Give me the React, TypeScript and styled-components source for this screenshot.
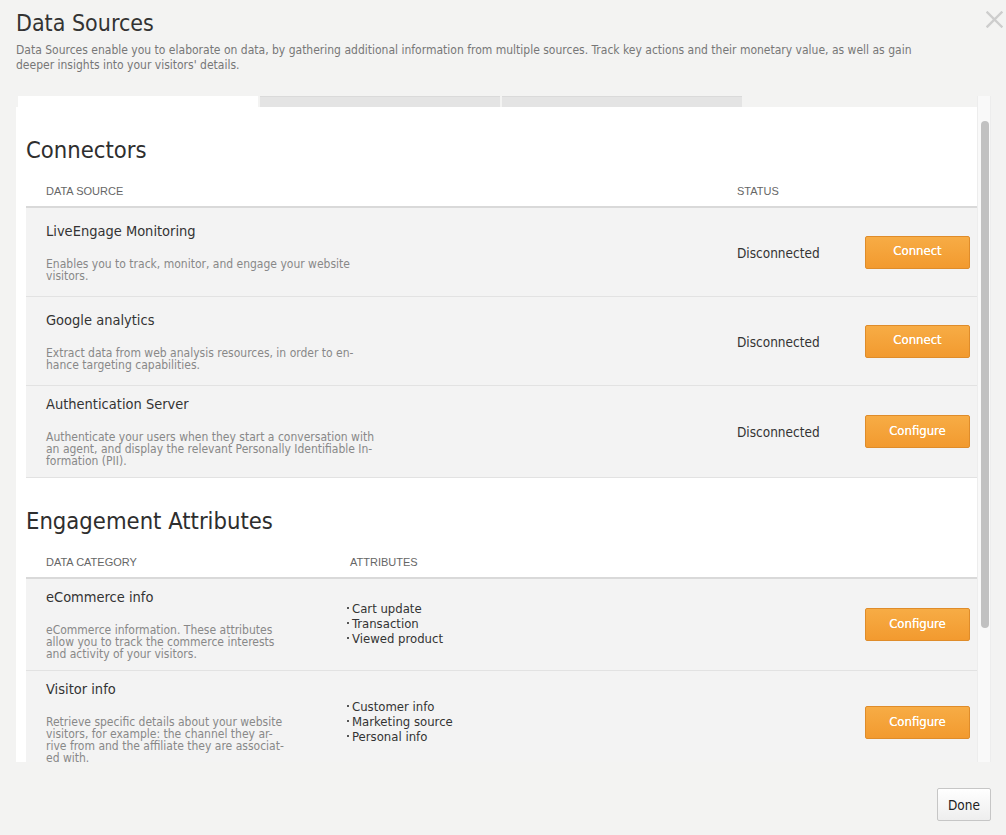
import React from 'react';
import styled, { createGlobalStyle } from 'styled-components';

const GlobalStyle = createGlobalStyle`
  html, body { margin: 0; padding: 0; background: #f3f3f2; }
  body { font-family: "DejaVu Sans Condensed", "DejaVu Sans", sans-serif; color: #333; }
  * { box-sizing: border-box; }
`;

const Page = styled.div`
  height: 835px;
  display: flex;
  flex-direction: column;
  padding: 9px 15px 0 16px;
  overflow: hidden;
`;

const Header = styled.header`
  display: flex;
  justify-content: space-between;
  align-items: flex-start;
  margin-right: -12px;
`;

const Title = styled.h1`
  margin: 0;
  font-size: 23px;
  line-height: 28px;
  font-weight: normal;
  color: #333;
`;

const Close = styled.button`
  border: 0;
  background: none;
  padding: 0;
  width: 17px;
  height: 17px;
  margin-top: 2px;
  display: flex;
  cursor: pointer;
`;

const Intro = styled.p`
  margin: 6px 0 0;
  font-size: 12px;
  line-height: 15px;
  color: #777;
  white-space: pre-line;
`;

const ScrollFrame = styled.div`
  margin-top: 23px;
  height: 666px;
  flex: none;
  display: flex;
`;

const ScrollContent = styled.div`
  flex: 1;
  min-width: 0;
  overflow: hidden;
`;

const ScrollTrack = styled.div`
  width: 14px;
  flex: none;
  background: #f9f9f9;
  border-left: 1px solid #ededed;
  border-right: 1px solid #ededed;
  padding: 25px 0 0 3px;
`;

const ScrollThumb = styled.div`
  width: 8px;
  height: 507px;
  background: #c1c1c1;
  border-radius: 4px;
`;

const Tabs = styled.div`
  display: flex;
  gap: 2px;
  padding-left: 2px;
  height: 11px;
`;

const Tab = styled.div<{ $active?: boolean }>`
  width: 240px;
  background: ${p => (p.$active ? '#fff' : '#e4e4e4')};
  border-top: 1px solid ${p => (p.$active ? '#fff' : '#dadada')};
`;

const Panel = styled.div`
  background: #fff;
  padding: 0 0 160px 10px;
`;

const SectionTitle = styled.h2`
  margin: 0;
  padding-top: 28px;
  font-size: 23.6px;
  line-height: 30px;
  font-weight: normal;
  color: #2e2e2e;
`;

const HeadRow = styled.div<{ $cols: string }>`
  display: grid;
  grid-template-columns: ${p => p.$cols};
  padding: 19px 7px 8px 20px;
  border-bottom: 2px solid #d9d9d9;
`;

const HeadCell = styled.div<{ $indent?: number }>`
  font-family: "Liberation Sans", Arial, sans-serif;
  font-size: 11px;
  line-height: 14px;
  color: #666;
  text-transform: uppercase;
  padding-left: ${p => p.$indent ?? 0}px;
`;

const Row = styled.div<{ $cols: string }>`
  display: grid;
  grid-template-columns: ${p => p.$cols};
  align-items: center;
  min-height: 89px;
  padding: 10px 7px 10px 20px;
  background: #f3f3f3;
  border-bottom: 1px solid #e2e2e2;
`;

const NameCell = styled.div`
  display: flex;
  flex-direction: column;
`;

const RowTitle = styled.div`
  font-size: 14.5px;
  line-height: 16px;
  color: #333;
`;

const RowDesc = styled.div`
  margin-top: 19px;
  font-size: 12px;
  line-height: 12px;
  color: #888;
  white-space: pre-line;
`;

const Status = styled.div`
  font-size: 13.5px;
  color: #333;
  margin-top: 1px;
`;

const ActionButton = styled.button`
  width: 105px;
  height: 33px;
  border: 1px solid #df8c2a;
  border-radius: 2px;
  background: linear-gradient(#f7ac45, #f29a2f);
  color: #fff;
  font-family: "DejaVu Sans Condensed", "DejaVu Sans", sans-serif;
  font-size: 13px;
  padding: 0 0 3px;
  text-shadow: 0 0 0.4px #fff;
  cursor: pointer;
`;

const AttrList = styled.ul`
  list-style: none;
  margin: 0 0 3px;
  padding: 0;
`;

const AttrItem = styled.li`
  font-size: 13px;
  line-height: 15px;
  color: #333;
  display: flex;
  align-items: center;
  &::before {
    content: '';
    width: 2px;
    height: 2px;
    background: #555;
    margin: 0 3px 1px 0;
  }
`;

const Footer = styled.footer`
  display: flex;
  justify-content: flex-end;
  padding-top: 26px;
`;

const DoneButton = styled.button`
  width: 54px;
  height: 33px;
  border: 1px solid #c6c6c6;
  border-radius: 2px;
  background: linear-gradient(#ffffff, #eeeeee);
  color: #222;
  font-family: "DejaVu Sans Condensed", "DejaVu Sans", sans-serif;
  font-size: 13.5px;
  padding: 0;
  cursor: pointer;
`;

const CONNECTOR_COLS = '1fr 128px 105px';
const ATTR_COLS = '301px 1fr 105px';

const connectors = [
  {
    name: 'LiveEngage Monitoring',
    desc: 'Enables you to track, monitor, and engage your website\nvisitors.',
    action: 'Connect',
  },
  {
    name: 'Google analytics',
    desc: 'Extract data from web analysis resources, in order to en-\nhance targeting capabilities.',
    action: 'Connect',
  },
  {
    name: 'Authentication Server',
    desc: 'Authenticate your users when they start a conversation with\nan agent, and display the relevant Personally Identifiable In-\nformation (PII).',
    action: 'Configure',
  },
];

const attributes = [
  {
    name: 'eCommerce info',
    desc: 'eCommerce information. These attributes\nallow you to track the commerce interests\nand activity of your visitors.',
    items: ['Cart update', 'Transaction', 'Viewed product'],
  },
  {
    name: 'Visitor info',
    desc: 'Retrieve specific details about your website\nvisitors, for example: the channel they ar-\nrive from and the affiliate they are associat-\ned with.',
    items: ['Customer info', 'Marketing source', 'Personal info'],
  },
];

export default function App() {
  return (
    <>
      <GlobalStyle />
      <Page>
        <Header>
          <Title>Data Sources</Title>
          <Close aria-label="Close">
            <svg width="17" height="17" viewBox="0 0 17 17">
              <path d="M1.5 1.5 L15.5 15.5 M15.5 1.5 L1.5 15.5" stroke="#cdcdcd" strokeWidth="2.4" strokeLinecap="square" />
            </svg>
          </Close>
        </Header>
        <Intro>
          {'Data Sources enable you to elaborate on data, by gathering additional information from multiple sources. Track key actions and their monetary value, as well as gain\ndeeper insights into your visitors\' details.'}
        </Intro>
        <ScrollFrame>
          <ScrollContent>
            <Tabs>
              <Tab $active />
              <Tab />
              <Tab />
            </Tabs>
            <Panel>
              <SectionTitle>Connectors</SectionTitle>
              <HeadRow $cols={CONNECTOR_COLS}>
                <HeadCell>Data Source</HeadCell>
                <HeadCell>Status</HeadCell>
                <div />
              </HeadRow>
              {connectors.map(c => (
                <Row key={c.name} $cols={CONNECTOR_COLS}>
                  <NameCell>
                    <RowTitle>{c.name}</RowTitle>
                    <RowDesc>{c.desc}</RowDesc>
                  </NameCell>
                  <Status>Disconnected</Status>
                  <ActionButton>{c.action}</ActionButton>
                </Row>
              ))}
              <SectionTitle>Engagement Attributes</SectionTitle>
              <HeadRow $cols={ATTR_COLS}>
                <HeadCell>Data Category</HeadCell>
                <HeadCell $indent={3}>Attributes</HeadCell>
                <div />
              </HeadRow>
              {attributes.map(a => (
                <Row key={a.name} $cols={ATTR_COLS}>
                  <NameCell>
                    <RowTitle>{a.name}</RowTitle>
                    <RowDesc>{a.desc}</RowDesc>
                  </NameCell>
                  <AttrList>
                    {a.items.map(i => (
                      <AttrItem key={i}>{i}</AttrItem>
                    ))}
                  </AttrList>
                  <ActionButton>Configure</ActionButton>
                </Row>
              ))}
            </Panel>
          </ScrollContent>
          <ScrollTrack aria-hidden="true">
            <ScrollThumb />
          </ScrollTrack>
        </ScrollFrame>
        <Footer>
          <DoneButton>Done</DoneButton>
        </Footer>
      </Page>
    </>
  );
}
